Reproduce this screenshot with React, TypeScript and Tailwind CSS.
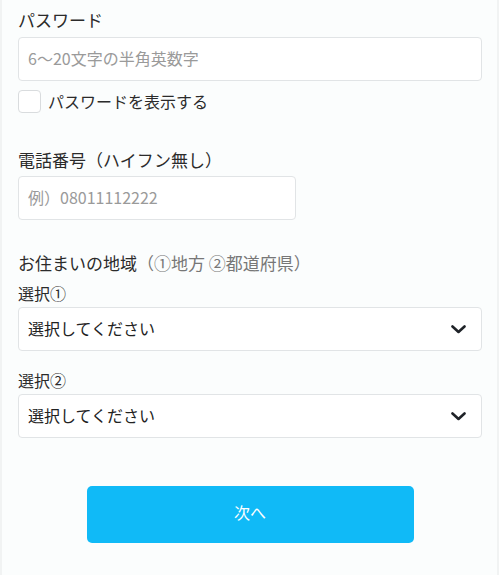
import React, { useState } from 'react';

const Chevron: React.FC = () => (
  <svg width="15" height="9" viewBox="0 0 15 9" fill="none" className="shrink-0">
    <path d="M1.5 1.5 L7.5 7 L13.5 1.5" stroke="#1f2328" strokeWidth="2.6" strokeLinecap="round" strokeLinejoin="round" />
  </svg>
);

const SelectBox: React.FC = () => (
  <div className="mt-[2px] flex h-[44px] w-[464px] items-center justify-between rounded-[4px] border border-[#e1e4e6] bg-white pl-[9px] pr-[15px]">
    <span className="pb-[2px] text-[16px] leading-[22px] text-[#222]">選択してください</span>
    <Chevron />
  </div>
);

const App: React.FC = () => {
  const [show, setShow] = useState(false);

  return (
    <div
      className="min-h-[575px] w-[499px] bg-[#f1f3f3] pl-[2px] pr-[2px]"
      style={{ fontFamily: '"Noto Sans CJK JP", "Noto Sans", sans-serif' }}
    >
      <div className="min-h-[575px] bg-[#fbfdfd] pl-[16px] pt-[7px] text-[#2b2b2b]">
        <div className="text-[17px] leading-[26px]">パスワード</div>
        <div className="mt-[4px] flex h-[44px] w-[464px] items-center rounded-[4px] border border-[#e1e4e6] bg-white px-[9px]">
          <span className="pb-[3px] text-[16px] leading-[20px] text-[#9a9a9a]">6～20文字の半角英数字</span>
        </div>

        <label className="mt-[9px] flex items-center gap-[7px]" onClick={() => setShow(!show)}>
          <span className="h-[23px] w-[23px] rounded-[4px] border border-[#d9dcde] bg-white" />
          <span className="text-[16px] leading-[21px]">パスワードを表示する</span>
        </label>

        <div className="mt-[35px] text-[17px] leading-[24px]">電話番号（ハイフン無し）</div>
        <div className="mt-[4px] flex h-[44px] w-[278px] items-center rounded-[4px] border border-[#e1e4e6] bg-white px-[9px]">
          <span className="pb-[3px] text-[16px] leading-[20px] text-[#9a9a9a]">例）08011112222</span>
        </div>

        <div className="mt-[31px] text-[17px] leading-[24px]">
          お住まいの地域<span className="text-[#777]">（①地方 ②都道府県）</span>
        </div>
        <div className="mt-[6px] text-[16px] leading-[24px]">選択①</div>
        <SelectBox />

        <div className="mt-[17px] text-[16px] leading-[24px]">選択②</div>
        <SelectBox />

        <div className="mt-[48px] flex w-[464px] justify-center">
          <button className="h-[57px] w-[327px] rounded-[5px] bg-[#10baf7] pb-[5px] text-[16px] text-white">
            次へ
          </button>
        </div>
      </div>
    </div>
  );
};

export default App;
